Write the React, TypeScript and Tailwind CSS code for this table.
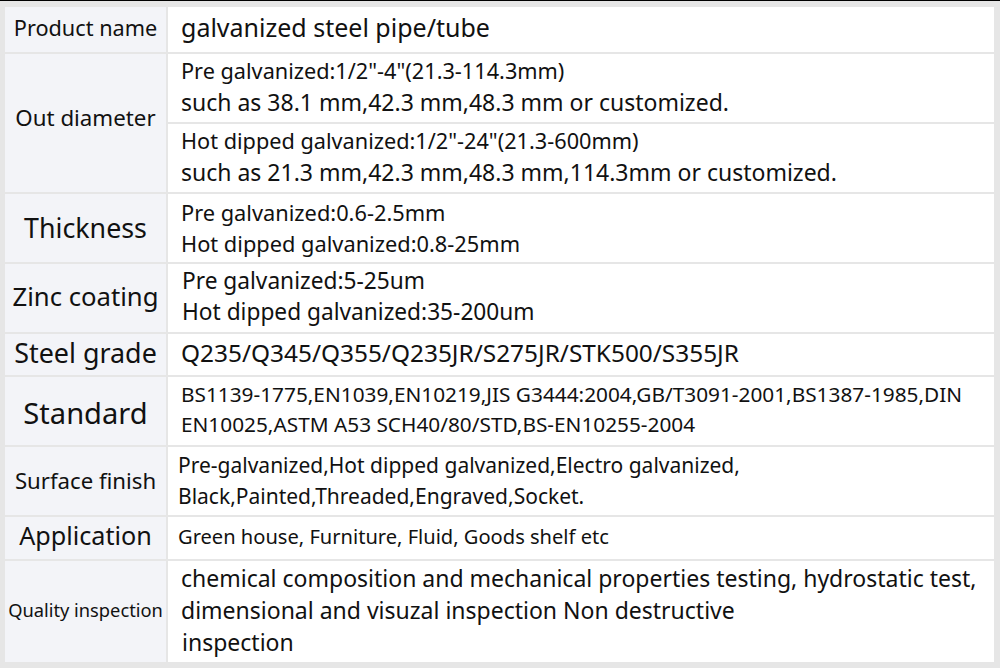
import React from "react";

function Label({ children, cls }: { children: React.ReactNode; cls: string }) {
  return (
    <div className={"flex items-center justify-center bg-[#f3f4f8] whitespace-nowrap text-[#111] " + cls}>
      {children}
    </div>
  );
}

function Cell({ lines, cls }: { lines: React.ReactNode[]; cls: string }) {
  return (
    <div className={"flex flex-col justify-center bg-white whitespace-nowrap text-[#111] " + cls}>
      {lines.map((l, i) => (
        <div key={i}>{l}</div>
      ))}
    </div>
  );
}

export default function App() {
  return (
    <div
      className="w-[1000px] h-[668px] border-t border-black bg-[#e6e6e6] pt-[6px] pl-[5px] pr-[6px] pb-[6px]"
      style={{ fontFamily: '"Noto Sans", "Open Sans", sans-serif' }}
    >
      <div className="grid h-full grid-cols-[161px_1fr] grid-rows-[45px_68px_68px_68px_68px_41px_68px_68px_42px_101px] gap-[2px]">
        <Label cls="text-[21.7px] pb-[2px]">Product name</Label>
        <Cell cls="pl-[13px] pb-[3px] text-[25px]" lines={["galvanized steel pipe/tube"]} />

        <Label cls="row-span-2 pb-[10px] text-[22.3px]">Out diameter</Label>
        <Cell
          cls="pl-[13px] leading-[29px]"
          lines={[
            <span className="text-[21.7px]">Pre galvanized:1/2"-4"(21.3-114.3mm)</span>,
            <span className="text-[23px]">such as 38.1 mm,42.3 mm,48.3 mm or customized.</span>,
          ]}
        />
        <Cell
          cls="pl-[13px] leading-[29px]"
          lines={[
            <span className="text-[21.7px]">Hot dipped galvanized:1/2"-24"(21.3-600mm)</span>,
            <span className="text-[23px]">such as 21.3 mm,42.3 mm,48.3 mm,114.3mm or customized.</span>,
          ]}
        />

        <Label cls="text-[26.8px]">Thickness</Label>
        <Cell
          cls="pl-[13px] text-[21.8px] leading-[31px]"
          lines={["Pre galvanized:0.6-2.5mm", "Hot dipped galvanized:0.8-25mm"]}
        />

        <Label cls="text-[25.7px] pb-[2px]">Zinc coating</Label>
        <Cell
          cls="pl-[14px] pb-[4px] text-[22.7px] leading-[31px]"
          lines={["Pre galvanized:5-25um", "Hot dipped galvanized:35-200um"]}
        />

        <Label cls="text-[26.9px] pb-[2px]">Steel grade</Label>
        <Cell cls="pl-[13px] pb-[2px] text-[24.4px]" lines={["Q235/Q345/Q355/Q235JR/S275JR/STK500/S355JR"]} />

        <Label cls="text-[29.1px] pt-[5px]">Standard</Label>
        <Cell
          cls="pl-[13px] pb-[4px] text-[20.8px] leading-[30px]"
          lines={[
            "BS1139-1775,EN1039,EN10219,JIS G3444:2004,GB/T3091-2001,BS1387-1985,DIN",
            "EN10025,ASTM A53 SCH40/80/STD,BS-EN10255-2004",
          ]}
        />

        <Label cls="text-[22.2px]">Surface finish</Label>
        <Cell
          cls="pl-[10px] text-[21px] leading-[31px]"
          lines={[
            "Pre-galvanized,Hot dipped galvanized,Electro galvanized,",
            "Black,Painted,Threaded,Engraved,Socket.",
          ]}
        />

        <Label cls="text-[25.2px] pb-[4px]">Application</Label>
        <Cell cls="pl-[10px] pb-[2px] text-[20.1px]" lines={["Green house, Furniture, Fluid, Goods shelf etc"]} />

        <Label cls="text-[18.3px] pb-[4px]">Quality inspection</Label>
        <Cell
          cls="pl-[13px] pb-[4px] text-[23px] leading-[32px]"
          lines={[
            "chemical composition and mechanical properties testing, hydrostatic test,",
            "dimensional and visuzal inspection Non destructive",
            <span className="pl-[1px]">inspection</span>,
          ]}
        />
      </div>
    </div>
  );
}
